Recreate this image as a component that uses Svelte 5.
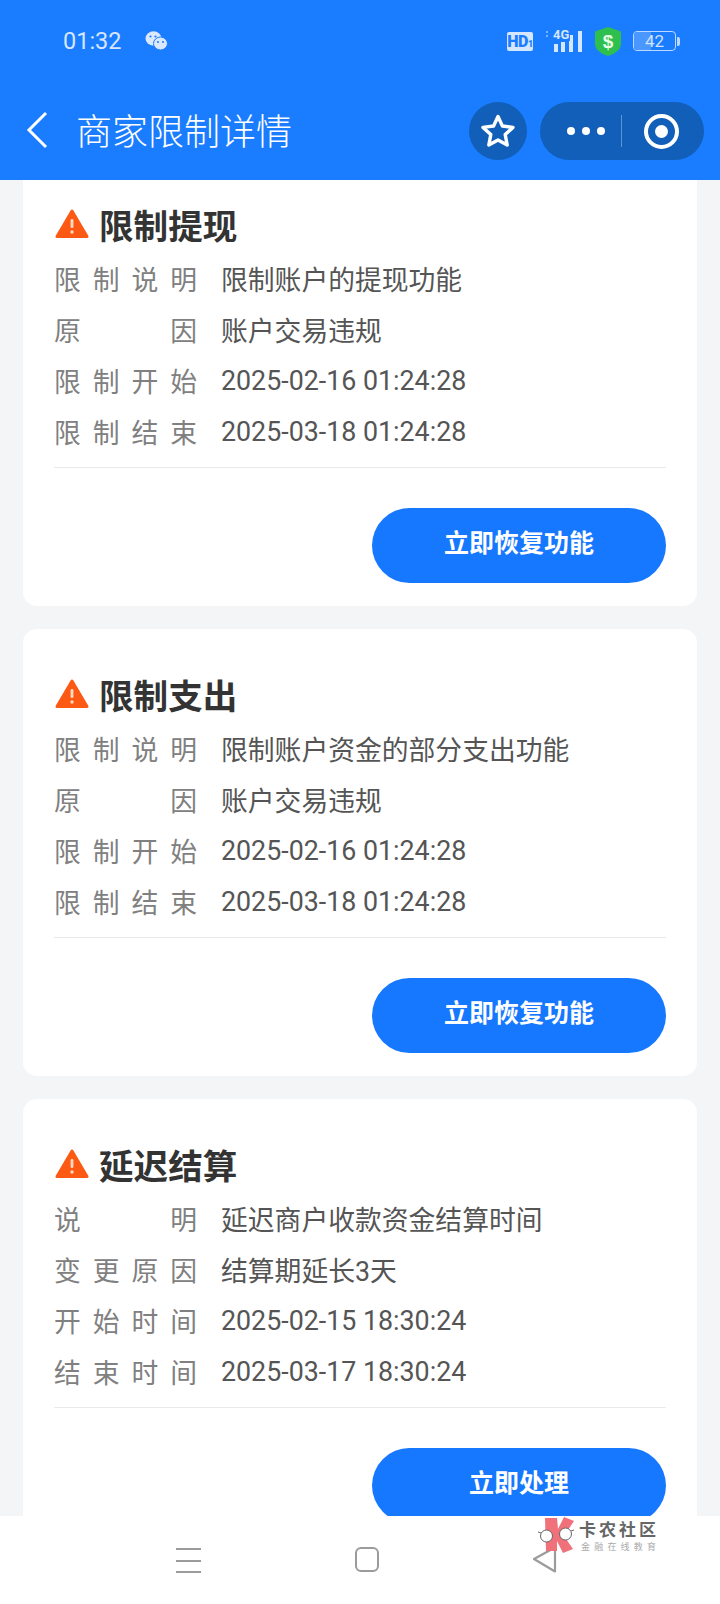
<script>
  const cards = [
    { title: '限制提现', action: '立即恢复功能', rows: [
      ['限制说明', '限制账户的提现功能'], ['原因', '账户交易违规'],
      ['限制开始', '2025-02-16 01:24:28'], ['限制结束', '2025-03-18 01:24:28'] ] },
    { title: '限制支出', action: '立即恢复功能', rows: [
      ['限制说明', '限制账户资金的部分支出功能'], ['原因', '账户交易违规'],
      ['限制开始', '2025-02-16 01:24:28'], ['限制结束', '2025-03-18 01:24:28'] ] },
    { title: '延迟结算', action: '立即处理', rows: [
      ['说明', '延迟商户收款资金结算时间'], ['变更原因', '结算期延长3天'],
      ['开始时间', '2025-02-15 18:30:24'], ['结束时间', '2025-03-17 18:30:24'] ] }
  ];
</script>

<div class="phone">
  <header>
    <div class="status">
      <span class="time">01:32</span>
      <svg class="wechat" width="23" height="20" viewBox="0 0 23 20">
        <ellipse cx="8.5" cy="7.5" rx="8" ry="7.2" fill="#dbe9ff"/>
        <ellipse cx="15.5" cy="12.5" rx="7" ry="6.5" fill="#dbe9ff" stroke="#1a7cff" stroke-width="1"/>
        <circle cx="5.5" cy="5.5" r="1.1" fill="#1a7cff"/><circle cx="10.5" cy="5.5" r="1.1" fill="#1a7cff"/>
        <circle cx="13" cy="11" r="1" fill="#1a7cff"/><circle cx="18" cy="11" r="1" fill="#1a7cff"/>
      </svg>
      <span class="spacer"></span>
      <span class="hd">HD<small>1</small></span>
      <span class="signal">
        <svg width="37" height="22" viewBox="0 0 37 22" fill="#d5e6ff">
          <rect x="0" y="1" width="2" height="2" opacity=".5"/><rect x="0" y="5" width="2" height="2" opacity=".5"/>
          <rect x="8" y="14" width="4" height="8"/><rect x="15" y="12" width="4" height="10"/>
          <rect x="23" y="5" width="4" height="17"/><rect x="32" y="1" width="4" height="21"/>
        </svg>
        <span class="tag">4G</span>
      </span>
      <svg class="shield" width="26" height="29" viewBox="0 0 26 29">
        <path d="M13 0 L26 4.5 V17 C26 23 19 27 13 29 C7 27 0 23 0 17 V4.5 Z" fill="#2fbf4e"/>
        <text x="13" y="20.5" text-anchor="middle" class="dollar">$</text>
      </svg>
      <span class="battery"><span class="fill"></span><span class="num">42</span></span>
      <span class="nub"></span>
    </div>
    <div class="nav">
      <svg class="back" width="24" height="38" viewBox="0 0 24 38" fill="none" stroke="#fff" stroke-width="3">
        <path d="M21 2 L4 19 L21 36"/>
      </svg>
      <span class="navtitle">商家限制详情</span>
      <span class="spacer"></span>
      <span class="fav">
        <svg width="36" height="36" viewBox="0 0 36 36" fill="none" stroke="#fff" stroke-width="3.4" stroke-linejoin="round">
          <path d="M18 3.5 L22.4 13 L33 14.4 L25.2 21.6 L27.2 32 L18 26.9 L8.8 32 L10.8 21.6 L3 14.4 L13.6 13 Z"/>
        </svg>
      </span>
      <span class="capsule">
        <span class="dots"><i></i><i></i><i></i></span>
        <span class="sep"></span>
        <span class="ring"><b></b></span>
      </span>
    </div>
  </header>

  <main>
    <div class="list">
      {#each cards as card}
        <section class="card">
          <h2>
            <svg width="34" height="30" viewBox="0 0 34 30">
              <path d="M17 2 L32 27.5 H2 Z" fill="#fc5a14" stroke="#fc5a14" stroke-width="3" stroke-linejoin="round"/>
              <rect x="15.6" y="10" width="2.8" height="9" rx="1.2" fill="#ffd9c2"/>
              <circle cx="17" cy="23" r="1.7" fill="#ffd9c2"/>
            </svg>
            {card.title}
          </h2>
          <dl>
            {#each card.rows as row}
              <div class="row">
                <dt>{row[0]}</dt>
                <dd>{row[1]}</dd>
              </div>
            {/each}
          </dl>
          <div class="foot">
            <button>{card.action}</button>
          </div>
        </section>
      {/each}
    </div>
  </main>

  <footer>
    <span class="menu"><i></i><i></i><i></i></span>
    <span class="home"></span>
    <svg class="tri" width="25" height="27" viewBox="0 0 25 27" fill="none" stroke="#9b9b9b" stroke-width="2.2" stroke-linejoin="round">
      <path d="M23 1.5 V25.5 L2 13 Z"/>
    </svg>
    <div class="mark">
      <svg width="38" height="37" viewBox="0 0 38 37">
        <path d="M7 1 H19 L20 12 L26 0 L36 4 L26 19 L35 32 L25 36 L19 24 L19 34 H8 Z" fill="#f0717a"/>
        <ellipse cx="8.5" cy="19" rx="6" ry="6" fill="#fff" stroke="#666" stroke-width="1"/>
        <ellipse cx="27.5" cy="17" rx="6" ry="6" fill="#fff" stroke="#666" stroke-width="1"/>
        <path d="M0 15 L3 16 M33 14 L36 13" stroke="#666" stroke-width="1"/>
      </svg>
      <div class="marktext">
        <span class="m1">卡农社区</span>
        <span class="m2">金融在线教育</span>
      </div>
    </div>
  </footer>
</div>

<style>
  :global(body) { margin: 0; background: #f4f5f7; }
  .phone {
    width: 720px; height: 1604px; display: flex; flex-direction: column; overflow: hidden;
    font-family: Roboto, "Noto Sans CJK SC", sans-serif; background: #f4f5f7;
  }
  header { height: 180px; background: #1a7cff; flex: none; color: #fff; z-index: 1; }
  .status { height: 100px; padding: 0 40px 18px 63px; box-sizing: border-box; display: flex; align-items: center; }
  .time { font-size: 23.5px; color: #d6e6ff; width: 82px; }
  .spacer { flex: 1; }
  .hd {
    background: #d5e6ff; color: #1a7cff; font-size: 16px; font-weight: 900; line-height: 19px; height: 19px;
    border-radius: 2px; width: 26px; text-align: center; white-space: nowrap; letter-spacing: -0.5px;
  }
  .hd small { font-size: 9px; }
  .signal { margin-left: 13px; position: relative; width: 37px; height: 22px; display: block; }
  .signal svg { display: block; }
  .tag { position: absolute; left: 6px; top: -2px; font-size: 13px; font-weight: 700; color: #d5e6ff; line-height: 13px; background: #1a7cff; padding: 0 1px; }
  .shield { margin-left: 12px; }
  .dollar { font-family: "Liberation Sans", sans-serif; font-size: 19px; font-weight: 700; fill: #e8ffe8; }
  .battery {
    margin-left: 12px; width: 43px; height: 20px; box-sizing: border-box; border: 1.5px solid #bcd8ff; border-radius: 4px; position: relative;
    display: flex; align-items: center; justify-content: center; overflow: hidden;
  }
  .fill { position: absolute; left: 0; top: 0; bottom: 0; width: 42%; background: #4a97ff; }
  .num { position: relative; font-size: 17px; color: #cfe2ff; line-height: 17px; }
  .nub { width: 3px; height: 9px; background: #bcd8ff; margin-left: 1px; border-radius: 0 2px 2px 0; }

  .nav { height: 80px; display: flex; align-items: flex-start; padding: 0 16px 0 25px; }
  .back { margin-top: 11px; flex: none; }
  .navtitle { margin-left: 27px; margin-top: 3px; font-size: 36px; line-height: 52px; font-weight: 300; font-family: "Noto Sans CJK SC", sans-serif; }
  .fav {
    width: 58px; height: 58px; border-radius: 50%; background: #115fb8; display: flex; align-items: center; justify-content: center; margin-top: 2px;
  }
  .capsule {
    width: 164px; height: 58px; border-radius: 29px; background: #115fb8; margin-left: 13px; margin-top: 2px;
    display: flex; align-items: center; position: relative;
  }
  .dots { display: flex; gap: 7px; margin-left: 27px; }
  .dots i { width: 8px; height: 8px; border-radius: 50%; background: #fff; }
  .sep { width: 1px; height: 32px; background: #5f93d2; margin-left: 16px; }
  .ring {
    width: 35px; height: 35px; border: 4.5px solid #fff; box-sizing: border-box; border-radius: 50%; margin-left: 22px;
    display: flex; align-items: center; justify-content: center;
  }
  .ring b { width: 13px; height: 13px; background: #fff; border-radius: 50%; }

  main { flex: 1; overflow: hidden; min-height: 0; }
  .list { margin-top: -21px; padding: 0 23px; display: flex; flex-direction: column; gap: 23px; }
  .card {
    height: 447px; flex: none; box-sizing: border-box; background: #fff; border-radius: 14px; padding: 41px 31px 0;
  }
  h2 {
    margin: 0; height: 48px; display: flex; align-items: center; gap: 10px;
    font-size: 34.6px; font-weight: 700; color: #333; font-family: "Noto Sans CJK SC", sans-serif;
  }
  h2 svg { margin-left: 1px; margin-top: -1px; }
  dl { margin: 5px 0 0; border-bottom: 1px solid #e9e9e9; padding-bottom: 10px; }
  .row { height: 51px; display: flex; align-items: center; font-size: 26.8px; }
  dt { width: 143px; text-align-last: justify; color: #808080; margin-right: 24px; flex: none; font-family: "Noto Sans CJK SC", sans-serif; font-weight: 400; }
  dd { margin: 0; color: #555; }
  .foot { display: flex; justify-content: flex-end; margin-top: 40px; }
  button {
    width: 294px; height: 75px; border: 0; border-radius: 38px; background: #1677ff; color: #fff;
    font: 700 25px "Noto Sans CJK SC", sans-serif; padding: 0 0 9px;
  }
  footer { height: 88px; flex: none; background: #fff; position: relative; z-index: 1; }
  .menu { position: absolute; left: 176px; top: 32px; width: 25px; height: 25px; display: flex; flex-direction: column; justify-content: space-between; }
  .menu i { height: 2px; background: #9b9b9b; }
  .home { position: absolute; left: 355px; top: 31px; width: 20px; height: 21px; border: 2px solid #9b9b9b; border-radius: 6px; }
  .tri { position: absolute; left: 532px; top: 30px; }
  .mark { position: absolute; left: 538px; top: 1px; display: flex; gap: 3px; }
  .marktext { display: flex; flex-direction: column; margin-top: 2px; font-family: "Noto Sans CJK SC", sans-serif; }
  .m1 { font-size: 17px; line-height: 19px; letter-spacing: 3px; font-weight: 700; color: #666; white-space: nowrap; }
  .m2 { font-size: 9px; line-height: 14px; margin-top: 2px; color: #aaa; letter-spacing: 4.2px; margin-left: 2px; white-space: nowrap; }
</style>
